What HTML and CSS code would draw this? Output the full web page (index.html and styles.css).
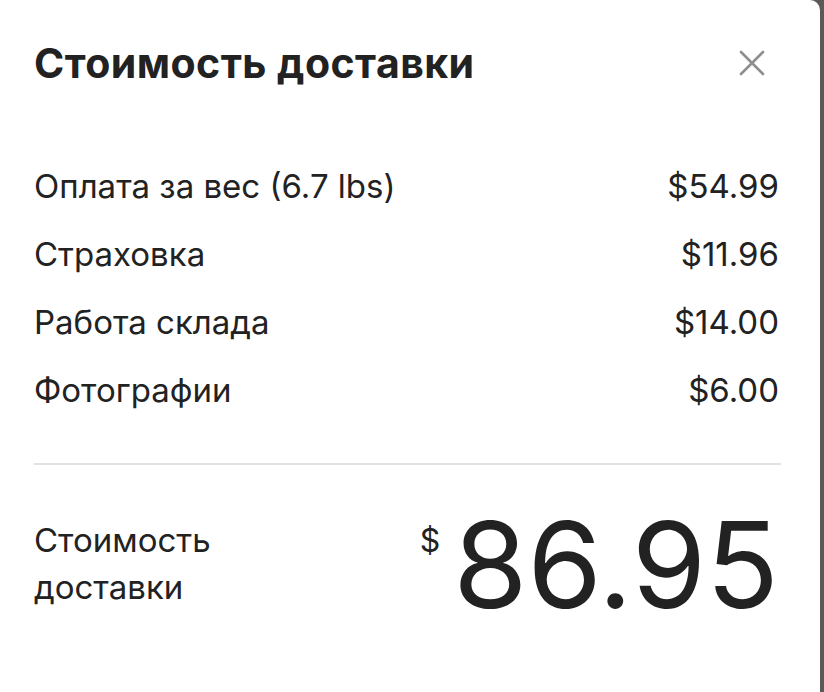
FILE: index.html
```html
<!DOCTYPE html>
<html lang="ru">
<head>
<meta charset="utf-8">
<link rel="stylesheet" href="styles.css">
</head>
<body>
<div class="card">
  <div class="header">
    <h1 class="title">Стоимость доставки</h1>
    <button class="close" aria-label="Закрыть">
      <svg width="26" height="26" viewBox="0 0 26 26"><path d="M2 2 L24 24 M24 2 L2 24" stroke="#8e8e8e" stroke-width="2.6" stroke-linecap="round" fill="none"/></svg>
    </button>
  </div>
  <div class="rows">
    <div class="row"><span>Оплата за вес (6.7 lbs)</span><span>$54.99</span></div>
    <div class="row"><span>Страховка</span><span>$11.96</span></div>
    <div class="row"><span>Работа склада</span><span>$14.00</span></div>
    <div class="row"><span>Фотографии</span><span>$6.00</span></div>
  </div>
  <div class="divider"></div>
  <div class="total">
    <div class="total-label">Стоимость<br>доставки</div>
    <div class="total-value"><span class="currency">$</span><span class="amount">86.95</span></div>
  </div>
</div>
</body>
</html>
```

FILE: styles.css
```css
html, body {
  margin: 0;
  padding: 0;
}
body {
  background: #5a5a5a;
  font-family: Inter, "Liberation Sans", Arial, sans-serif;
  color: #222222;
}
.card {
  width: 820px;
  height: 692px;
  background: #ffffff;
  border-top-right-radius: 10px;
  box-sizing: border-box;
  padding: 0 41px 0 34px;
}
.header {
  display: flex;
  justify-content: space-between;
  align-items: center;
  padding-top: 38px;
  height: 50px;
}
.title {
  margin: 0;
  font-size: 41px;
  font-weight: 700;
  line-height: 50px;
  letter-spacing: 0.45px;
}
.close {
  border: none;
  background: none;
  padding: 0;
  width: 26px;
  height: 26px;
  margin-right: 14px;
}
.close svg {
  display: block;
}
.rows {
  display: flex;
  flex-direction: column;
  margin-top: 77px;
  gap: 26px;
}
.row {
  display: flex;
  justify-content: space-between;
  font-size: 33px;
  line-height: 42px;
}
.divider {
  height: 2px;
  background: #e2e2e2;
  margin-top: 52px;
  margin-right: -2px;
}
.total {
  display: flex;
  justify-content: space-between;
  align-items: flex-start;
  margin-top: 52px;
}
.total-label {
  font-size: 33px;
  line-height: 47px;
}
.total-value {
  display: flex;
  align-items: flex-start;
}
.currency {
  font-size: 32px;
  line-height: 40px;
  margin-top: 4px;
  margin-right: 13px;
}
.amount {
  font-size: 120px;
  line-height: 96px;
}
```
